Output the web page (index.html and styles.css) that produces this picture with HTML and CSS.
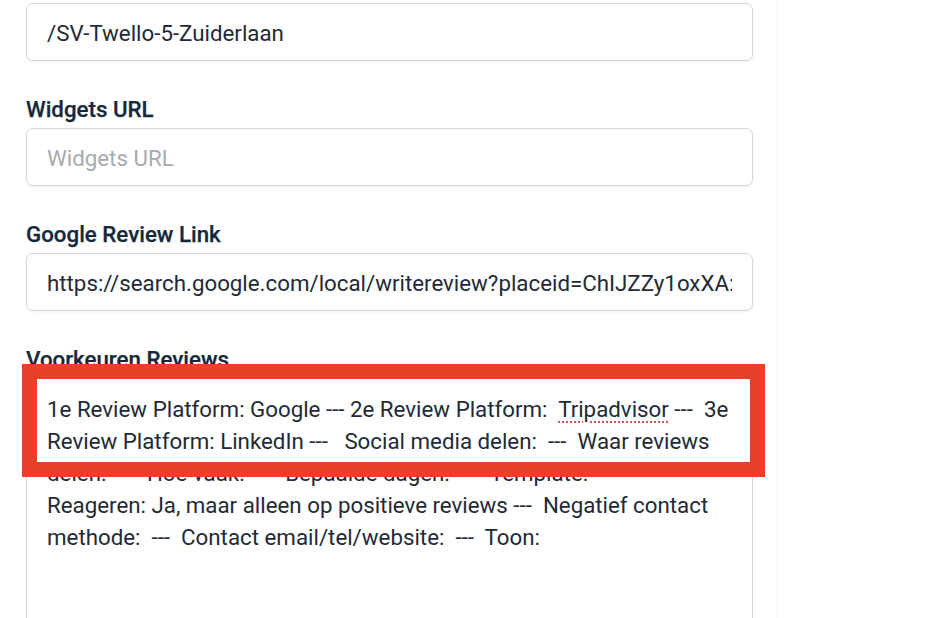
FILE: index.html
```html
<!DOCTYPE html>
<html lang="nl">
<head>
<meta charset="utf-8">
<title>Locatie instellingen</title>
<link rel="stylesheet" href="styles.css">
</head>
<body>
<div class="page">
  <main class="main">
    <div class="form">
      <div class="field first">
        <div class="input"><span class="value">/SV-Twello-5-Zuiderlaan</span></div>
      </div>
      <div class="field">
        <label class="label">Widgets URL</label>
        <div class="input placeholder"><span class="value">Widgets URL</span></div>
      </div>
      <div class="field">
        <label class="label">Google Review Link</label>
        <div class="input"><span class="value">https://search.google.com/local/writereview?placeid=ChIJZZy1oxXA:</span></div>
      </div>
      <div class="field">
        <label class="label">Voorkeuren Reviews</label>
        <div class="textarea">
          <div class="line">1e Review Platform: Google --- 2e Review Platform:  <span class="spell">Tripadvisor</span> ---  3e</div>
          <div class="line">Review Platform: LinkedIn ---   Social media delen:  ---  Waar reviews</div>
          <div class="line">delen:  ---  Hoe vaak:  ---  Bepaalde dagen:  ---  Template:</div>
          <div class="line">Reageren: Ja, maar alleen op positieve reviews ---  Negatief contact</div>
          <div class="line">methode:  ---  Contact email/tel/website:  ---  Toon:</div>
        </div>
      </div>
    </div>
    <div class="highlight"></div>
  </main>
  <aside class="side"></aside>
</div>
</body>
</html>
```

FILE: styles.css
```css
html, body {
  margin: 0;
  padding: 0;
  background: #ffffff;
}

body {
  font-family: Roboto, "Liberation Sans", sans-serif;
  color: #1f2937;
  overflow: hidden;
}

.page {
  display: flex;
  height: 618px;
}

.main {
  position: relative;
  width: 778px;
  border-right: 1px solid #f2f3f5;
  box-sizing: border-box;
}

.side {
  flex: 1;
}

.form {
  display: flex;
  flex-direction: column;
  padding: 3px 0 0 26px;
  width: 727px;
}

.field {
  display: flex;
  flex-direction: column;
  margin-top: 36px;
}

.field.first {
  margin-top: 0;
}

.label {
  font-size: 22.3px;
  line-height: 24px;
  font-weight: 500;
  color: #15293b;
  margin-bottom: 7px;
  -webkit-text-stroke: 0.25px #15293b;
}

.input {
  height: 58px;
  box-sizing: border-box;
  border: 1px solid #d4d6da;
  border-radius: 7px;
  box-shadow: 0 1px 3px rgba(0, 0, 0, 0.06);
  padding: 0 20px;
  display: flex;
  align-items: center;
  font-size: 22.3px;
  color: #232a35;
}

.value {
  flex: 1;
  min-width: 0;
  white-space: nowrap;
  overflow: hidden;
  padding-top: 1px;
}

.placeholder {
  color: #a7abb1;
}

.textarea {
  height: 300px;
  box-sizing: border-box;
  border: 1px solid #d4d6da;
  border-radius: 7px;
  padding: 14px 20px;
  font-size: 22.3px;
  line-height: 32px;
  color: #232a35;
}

.line {
  white-space: pre;
}

.spell {
  text-decoration: underline dotted #e0524a;
  text-decoration-thickness: 2px;
  text-underline-offset: 4px;
}

.highlight {
  position: absolute;
  left: 22px;
  top: 364px;
  width: 743px;
  height: 113px;
  box-sizing: border-box;
  border: 15px solid #e8412a;
}
```
